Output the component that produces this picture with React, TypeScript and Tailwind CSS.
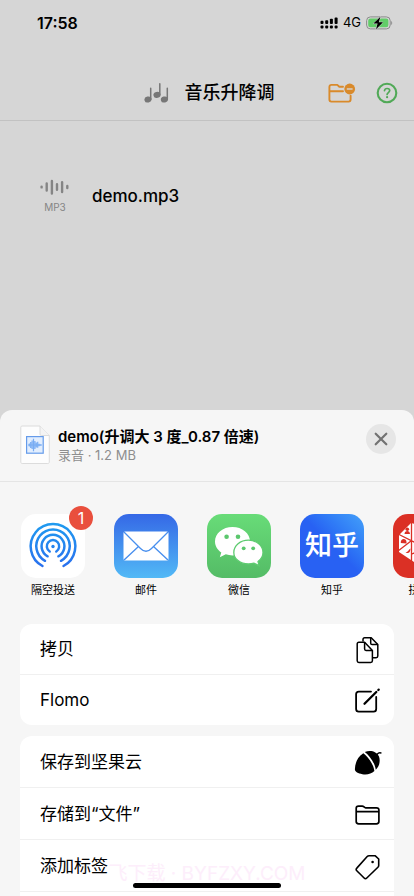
import React from 'react';

interface ShareApp {
  name: string;
  icon: React.ReactNode;
  badge?: number;
}

interface ShareAction {
  label: string;
  icon: React.ReactNode;
}

const SignalIcon = () => (
  <svg width="18" height="12" viewBox="0 0 18 12" aria-hidden="true">
    <rect x=".5" y="3.800" width="3" height="3.200" rx=".9" />
    <rect x="5.200" y="3.200" width="3" height="3.800" rx=".9" />
    <rect x="9.900" y="1.700" width="3" height="5.300" rx=".9" />
    <rect x="14.600" y=".5" width="3" height="6.500" rx=".9" />
    <rect x=".5" y="8.400" width="3" height="3.200" rx="1" />
    <rect x="5.200" y="8.400" width="3" height="3.200" rx="1" />
    <rect x="9.900" y="8.400" width="3" height="3.200" rx="1" />
    <rect x="14.600" y="8.400" width="3" height="3.200" rx="1" />
  </svg>
);

const BatteryIcon = () => (
  <svg width="27" height="14" viewBox="0 0 27 14" aria-hidden="true">
    <rect x=".6" y=".9" width="23.6" height="12" rx="3.8" fill="none" stroke="#8b8b8b" strokeWidth="1" />
    <rect x="2.2" y="2.5" width="20.2" height="8.8" rx="2.2" fill="#62cd68" />
    <path d="M25.2 5v4c1.3-.5 1.3-3.5 0-4z" fill="#8b8b8b" />
    <path d="M14.4.8 7.4 7.6h4.2L10 13.2l7-6.9h-4.2z" fill="#000" stroke="#d6d6d6" strokeWidth="1" paintOrder="stroke" />
  </svg>
);

const NotesIcon = () => (
  <svg width="25" height="22" viewBox="0 0 25 22" fill="#777" aria-hidden="true">
    <g stroke="#777" strokeWidth="1.5" strokeLinecap="round">
      <path d="M6.7 6.3v11M15.8 1.8v11M23.3 6.3v11" />
    </g>
    <ellipse cx="4" cy="17.5" rx="3.6" ry="3" transform="rotate(-15 4 17.5)" />
    <ellipse cx="13" cy="12.9" rx="3.6" ry="3" transform="rotate(-15 13 12.9)" />
    <ellipse cx="20.4" cy="17.5" rx="3.6" ry="3" transform="rotate(-15 20.4 17.5)" />
  </svg>
);

const FolderMinusIcon = () => (
  <svg width="28" height="21" viewBox="0 0 28 21" fill="none" aria-hidden="true">
    <path
      d="M15 3.700h-3.700L9.300 1.900H3.400c-1.200 0-2 .8-2 2V16.600c0 1.200.8 2 2 2h17.200c1.200 0 2-.8 2-2v-3.800M1.600 8.300h13.400"
      stroke="#d98a2b"
      strokeWidth="1.900"
      strokeLinecap="round"
      strokeLinejoin="round"
    />
    <circle cx="21.700" cy="6" r="5.400" fill="#d98a2b" />
    <path d="M18.800 6h5.800" stroke="#d6d6d6" strokeWidth="1.400" />
  </svg>
);

const HelpIcon = () => (
  <svg width="22" height="22" viewBox="0 0 22 22" fill="none" stroke="#51a957" aria-hidden="true">
    <circle cx="11" cy="11" r="9.3" strokeWidth="2.100" />
    <path d="M8.500 8.700c.2-1.500 1.200-2.200 2.600-2.200s2.600.8 2.600 2.100c0 1.900-2.600 2-2.600 3.900" strokeWidth="1.700" strokeLinecap="round" />
    <circle cx="11.100" cy="15.200" r="1.100" fill="#51a957" stroke="none" />
  </svg>
);

const WaveIcon = () => (
  <svg width="30" height="16" viewBox="0 0 30 16" stroke="#858585" strokeWidth="2.400" strokeLinecap="round" aria-hidden="true">
    <path d="M1.600 7.600v.8M6.700 4.500v7M11.900 1.900v12.600M17 5.200v5.600M22.100 3.300v9.800M27.300 7v2" />
  </svg>
);

const AudioFileIcon = () => (
  <svg width="30" height="40" viewBox="0 0 30 40" fill="none" aria-hidden="true">
    <path d="M2 1h18l9.300 9.500V37c0 1-.6 1.500-1.500 1.500H2.200C1.300 38.500.8 38 .8 37V2.300C.8 1.500 1.300 1 2 1z" fill="#fdfdfd" stroke="#dcdcdc" />
    <path d="M20 1v8c0 1 .5 1.500 1.500 1.500h7.800" fill="#f4f4f4" stroke="#dcdcdc" />
    <rect x="6.600" y="11.600" width="16.600" height="16.600" fill="#e2eefe" stroke="#659bea" strokeWidth="1.200" />
    <path
      d="M8 20h14M9.300 18.500v3M10.700 17v6M12.100 15.500v8.500M13.500 13.700v12.600M14.900 16v8M16.300 17.500v5M17.700 16.800v6M19.100 18.700v2.600M20.500 19.300v1.400"
      stroke="#78acf3"
      strokeWidth="1.200"
    />
  </svg>
);

const AirDropIcon = () => (
  <svg className="size-16" viewBox="0 0 64 64" fill="none" aria-hidden="true">
    <defs>
      <linearGradient id="airdrop" gradientUnits="userSpaceOnUse" x1="0" y1="9" x2="0" y2="54">
        <stop stopColor="#1f9bf0" />
        <stop offset="1" stopColor="#2a6fee" />
      </linearGradient>
    </defs>
    <g stroke="url(#airdrop)" strokeWidth="2.500" strokeLinecap="round">
      <path d="M21.500 52a22.300 22.300 0 1 1 21 0" />
      <path d="M24 46.800a16.700 16.700 0 1 1 16 0" />
      <path d="M26.600 42.300a11.400 11.400 0 1 1 10.800 0" />
      <path d="M28.700 37.500a6.200 6.200 0 1 1 6.600 0" />
    </g>
    <circle cx="32" cy="32.500" r="1.700" fill="#2484ef" />
  </svg>
);

const MailIcon = () => (
  <svg className="size-16" viewBox="0 0 64 64" fill="none" aria-hidden="true">
    <defs>
      <linearGradient id="mail" x1="0" y1="0" x2="0" y2="1">
        <stop stopColor="#3568e6" />
        <stop offset="1" stopColor="#52b9f6" />
      </linearGradient>
      <clipPath id="envelope">
        <rect x="9.500" y="17.500" width="45" height="29" rx="1.500" />
      </clipPath>
    </defs>
    <rect width="64" height="64" fill="url(#mail)" />
    <g clipPath="url(#envelope)">
      <rect x="9" y="17" width="46" height="30" fill="#fff" />
      <path d="m9 17 17.500 17.500c3.600 3.600 7.400 3.600 11 0L55 17M9 47l15.500-14.500M55 47 39.500 32.500" stroke="#488fee" strokeWidth="1.300" />
    </g>
  </svg>
);

const WeChatIcon = () => (
  <svg className="size-16" viewBox="0 0 64 64" aria-hidden="true">
    <defs>
      <linearGradient id="wechat" x1="0" y1="0" x2="0" y2="1">
        <stop stopColor="#68dc78" />
        <stop offset="1" stopColor="#54bc66" />
      </linearGradient>
    </defs>
    <rect width="64" height="64" fill="url(#wechat)" />
    <path d="M25.500 13C15.800 13 8 19.300 8 27.400c0 4.500 2.500 8.400 6.300 11l-1.500 4.900 6-3c2.100.7 4.300 1.100 6.700 1.100 9.700 0 17.500-6 17.500-14S35.200 13 25.500 13z" fill="#fff" />
    <path
      d="M41.400 26.200c8.200 0 14.600 5.400 14.600 12.200 0 3.700-2 6.800-5 9.100l1.100 4.200-5.100-2.500c-1.700.5-3.600.8-5.600.8-8.100 0-14.600-5.200-14.600-11.600 0-6.800 6.500-12.200 14.600-12.200z"
      fill="#fff"
      stroke="#5ecb70"
      strokeWidth="1.300"
    />
    <g fill="#5bc76d">
      <circle cx="19.600" cy="22.700" r="2.300" />
      <circle cx="31" cy="22.700" r="2.300" />
      <circle cx="36.700" cy="34.300" r="1.900" />
      <circle cx="46.200" cy="34.300" r="1.900" />
    </g>
  </svg>
);

const ZhihuIcon = () => (
  <span className="flex size-16 items-center justify-center bg-linear-to-tr from-[#2861f3] from-50% to-[#45a0f9] text-[27px] font-medium text-white">
    知乎
  </span>
);

const PinduoduoIcon = () => (
  <svg className="size-16" viewBox="0 0 64 64" aria-hidden="true">
    <rect width="64" height="64" fill="#db3025" />
    <path d="M6 21 18 9l14 4 14-4 12 12v17L46 49l-14 6-14-9L6 38z" fill="#fff" />
    <path d="M18.500 8v40M45.500 8v40M5 20l40 20M59 20 19 40M18 27 5 37M46 27l13 10" fill="none" stroke="#db3025" strokeWidth="1.300" />
    <g fill="#db3025">
      <circle cx="14.300" cy="15.300" r="1.800" />
      <path d="M11.500 20c0-4 5.500-4 5.500 0zM7.800 29c-.6-5 5.700-5 5.700-1v1.500zM12.500 38.500c3-.5 3-3 5-4-.2 4-2 5.500-5 4z" />
      <circle cx="27" cy="20" r="3" />
      <circle cx="27" cy="44" r="3" />
    </g>
  </svg>
);

const CopyIcon = () => (
  <svg width="28" height="28" viewBox="0 0 28 28" fill="none" stroke="#000" strokeWidth="1.500" strokeLinejoin="round" aria-hidden="true">
    <path d="M9 5.500V3.400c0-1 .6-1.600 1.600-1.600h6.600l6.600 6.800V20c0 1-.6 1.700-1.700 1.700h-3.300" />
    <path d="M16.700 1.800v5.400c0 1 .4 1.400 1.400 1.400h5.700" />
    <path d="M4.900 6.300h5.700l7.800 8.200v10.300c0 1.200-.6 1.700-1.700 1.700H4.900c-1.100 0-1.700-.6-1.700-1.700V8c0-1.100.6-1.700 1.700-1.700z" />
    <path d="M10.600 6.300v6.800c0 1 .4 1.400 1.400 1.400h6.400" />
  </svg>
);

const ComposeIcon = () => (
  <svg width="28" height="28" viewBox="0 0 28 28" fill="none" stroke="#000" strokeWidth="1.800" strokeLinecap="round" aria-hidden="true">
    <path d="M17 4.600H4.700C3 4.600 2.100 5.500 2.100 7.200v14.900c0 1.700.9 2.600 2.600 2.600h14.900c1.700 0 2.600-.9 2.600-2.600V10" />
    <path d="M10.500 16.800 22.300 5" strokeWidth="2.300" />
    <path d="m24.300 3 .4-.4" strokeWidth="2.300" />
  </svg>
);

const AcornIcon = () => (
  <svg width="28" height="28" viewBox="0 0 28 28" aria-hidden="true">
    <path d="M9.300 4.200C13 7 19.500 14.500 20.400 22c-3 3-7.500 4-12 3.200C4 24.500.6 23 .9 20c.2-5.500 2.400-12.300 8.400-15.800z" />
    <path d="M10.800 3c5.700-2.200 12-.5 14.200 4.500 1.600 4.800.3 9.800-3.200 13.200C20.800 13.700 15.500 6.800 10.800 3z" />
    <path d="M23.300 5.200c.8-1.200 2-1.600 3.600-1.300" fill="none" stroke="#000" strokeWidth="1.500" strokeLinecap="round" />
  </svg>
);

const FolderIcon = () => (
  <svg width="28" height="28" viewBox="0 0 28 28" fill="none" stroke="#000" strokeWidth="1.700" strokeLinejoin="round" aria-hidden="true">
    <path d="M2.200 20.500V7.300c0-1.500.8-2.200 2.300-2.200h3.800c1.500 0 1.900 1.700 3.300 1.700h10.800c1.700 0 2.500.8 2.500 2.300v11.400c0 1.500-.8 2.300-2.500 2.300H4.700c-1.700 0-2.500-.8-2.500-2.300zM2.200 10.600h22.700" />
  </svg>
);

const TagIcon = () => (
  <svg width="28" height="28" viewBox="0 0 28 28" fill="none" stroke="#000" strokeWidth="1.600" strokeLinejoin="round" aria-hidden="true">
    <path d="M15 2.800h6.300L24.700 6v6.400c0 .9-.2 1.300-.8 1.900L12.800 25c-.9.9-1.800.9-2.700 0l-7.300-7.200c-.9-.9-.9-1.800 0-2.700L13.200 3.500c.5-.5 1-.7 1.800-.7z" />
    <circle cx="18.600" cy="9" r="1.300" fill="#000" stroke="none" />
  </svg>
);

const shareApps: ShareApp[] = [
  { name: '隔空投送', icon: <AirDropIcon />, badge: 1 },
  { name: '邮件', icon: <MailIcon /> },
  { name: '微信', icon: <WeChatIcon /> },
  { name: '知乎', icon: <ZhihuIcon /> },
  { name: '拼多多', icon: <PinduoduoIcon /> },
];

const primaryActions: ShareAction[] = [
  { label: '拷贝', icon: <CopyIcon /> },
  { label: 'Flomo', icon: <ComposeIcon /> },
];

const moreActions: ShareAction[] = [
  { label: '保存到坚果云', icon: <AcornIcon /> },
  { label: '存储到“文件”', icon: <FolderIcon /> },
  { label: '添加标签', icon: <TagIcon /> },
];

interface ActionListProps {
  actions: ShareAction[];
  rowClassName: string;
  continued?: boolean;
}

const ActionList: React.FC<ActionListProps> = ({ actions, rowClassName, continued }) => (
  <ul className="divide-y divide-[#f0f0f0] overflow-hidden rounded-xl bg-white">
    {actions.map((action) => (
      <li key={action.label}>
        <button className={`flex w-full items-center justify-between pl-5 pr-3 pt-0.5 text-left text-[17px] ${rowClassName}`}>
          <span>{action.label}</span>
          {action.icon}
        </button>
      </li>
    ))}
    {continued && <li className={rowClassName} aria-hidden="true" />}
  </ul>
);

const App: React.FC = () => {
  return (
    <div className="relative flex h-screen flex-col overflow-hidden bg-[#d6d6d6] font-['Inter','Noto_Sans_CJK_SC',sans-serif] text-black">
      <div className="min-h-[410px] shrink-0">
        <div className="flex h-[46px] items-center justify-between pl-[37px] pr-[21px]">
          <span className="text-base font-semibold">17:58</span>
          <div className="flex items-center gap-[5px]">
            <SignalIcon />
            <span className="text-[13px]">4G</span>
            <BatteryIcon />
          </div>
        </div>

        <header className="grid h-[75px] grid-cols-[1fr_auto_1fr] items-center border-b border-[#c2c2c2] pl-5 pr-4 pt-5">
          <div />
          <div className="flex items-center gap-4">
            <NotesIcon />
            <h1 className="text-lg font-medium">音乐升降调</h1>
          </div>
          <div className="flex items-center justify-end gap-5">
            <button aria-label="文件夹">
              <FolderMinusIcon />
            </button>
            <button aria-label="帮助">
              <HelpIcon />
            </button>
          </div>
        </header>

        <main className="pt-[54px]">
          <button className="flex w-full items-center gap-[22px] px-10 py-1 text-left">
            <div className="flex flex-col items-center gap-1">
              <WaveIcon />
              <span className="text-[10px] leading-4 text-[#858585]">MP3</span>
            </div>
            <span className="text-[17px] font-medium">demo.mp3</span>
          </button>
        </main>
      </div>

      <section className="flex-1 rounded-t-xl bg-[#f6f6f6]" aria-label="共享">
        <div className="flex h-[72px] items-center gap-2 border-b border-[#e5e5e5] pb-4 pl-5 pr-[18px] pt-3.5">
          <AudioFileIcon />
          <div className="min-w-0 flex-1">
            <h2 className="truncate text-[15px] font-semibold leading-5">demo(升调大 3 度_0.87 倍速)</h2>
            <p className="text-[13px] leading-4 text-[#8e8e8e]">录音 · 1.2 MB</p>
          </div>
          <button aria-label="关闭" className="flex size-[30px] items-center justify-center self-start rounded-full bg-[#e6e6e6]">
            <svg width="14" height="14" viewBox="0 0 14 14" stroke="#727272" strokeWidth="2.200" strokeLinecap="round">
              <path d="m1.700 1.700 10.600 10.600M12.300 1.700 1.700 12.300" />
            </svg>
          </button>
        </div>

        <div className="flex gap-[29px] overflow-hidden pb-[26px] pl-[21px] pt-8">
          {shareApps.map((app) => (
            <button key={app.name} className="relative w-16 shrink-0 text-center">
              <span className="block overflow-hidden rounded-[15px] bg-white">{app.icon}</span>
              {app.badge && (
                <span className="absolute -right-2 -top-2 flex size-6 items-center justify-center rounded-full bg-[#e94f3d] text-base text-white">
                  {app.badge}
                </span>
              )}
              <span className="mt-1 block text-[11px] leading-4">{app.name}</span>
            </button>
          ))}
        </div>

        <div className="flex flex-col gap-[11px] px-5">
          <ActionList actions={primaryActions} rowClassName="h-[50px]" />
          <ActionList actions={moreActions} rowClassName="h-[51px]" continued />
        </div>
      </section>

      <div className="pointer-events-none absolute inset-x-0 bottom-2 text-center text-[19px] leading-7 text-[#fdeefb]">
        飞下载 · BYFZXY.COM
      </div>
      <div className="absolute bottom-2 left-1/2 h-[5px] w-[148px] -translate-x-1/2 rounded-full bg-black" />
    </div>
  );
};

export default App;
